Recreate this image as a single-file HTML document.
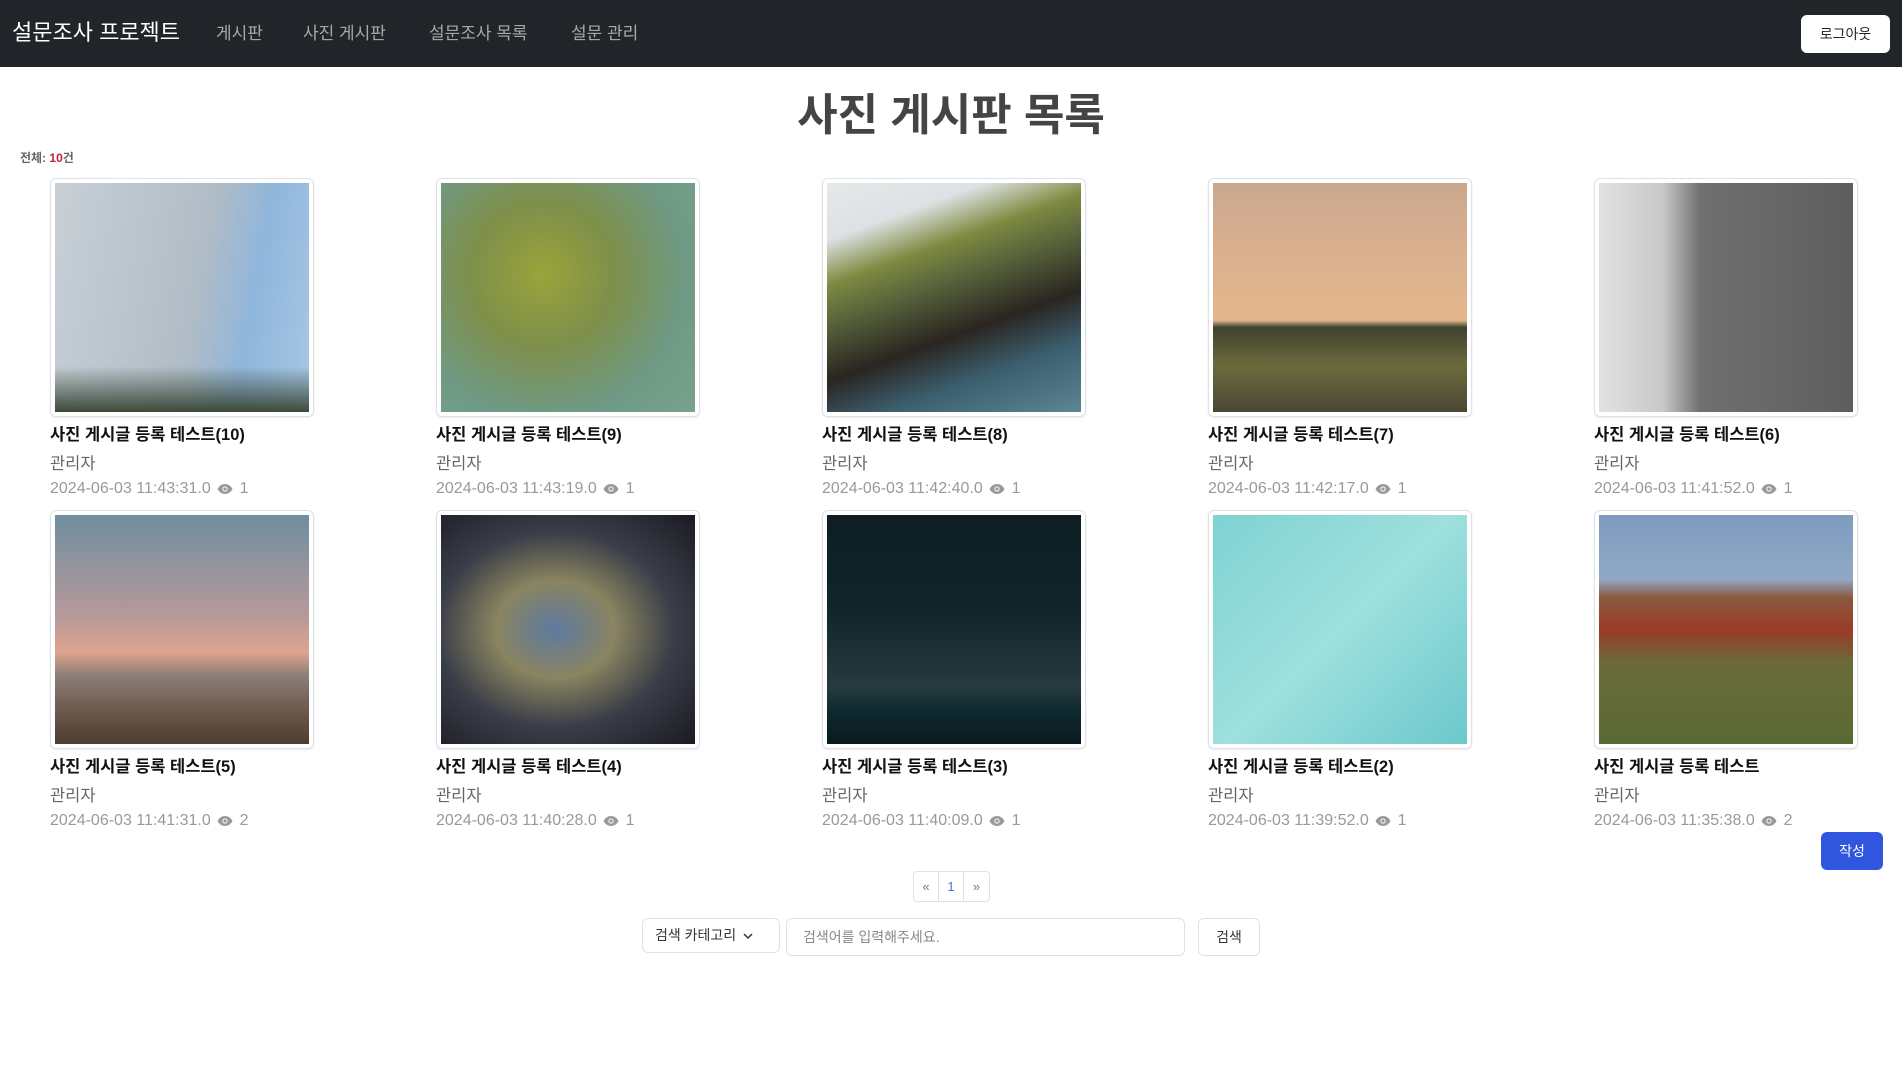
<!DOCTYPE html>
<html><head><meta charset="utf-8">
<style>
*{box-sizing:border-box;margin:0;padding:0}
body{width:1902px;height:1080px;background:#fff;font-family:"Liberation Sans","Noto Sans CJK KR",sans-serif;position:relative;overflow:hidden}
.nav{position:absolute;left:0;top:0;width:1902px;height:67px;background:#212529}
.brand{position:absolute;left:12px;top:19px;color:#fff;font-size:22px;line-height:28px}
.nl{position:absolute;top:22px;color:rgba(255,255,255,.6);font-size:17px;line-height:24px}
.logout{position:absolute;left:1801px;top:15px;width:89px;height:38px;background:#fff;border-radius:6px;font-size:14px;text-align:center;line-height:38px;color:#212529}
h1{position:absolute;left:0;width:1902px;top:89px;text-align:center;font-size:44px;font-weight:bold;color:#444;line-height:54px}
.total{position:absolute;left:20px;top:149px;font-size:12px;font-weight:bold;color:#666}
.total b{color:#c0203a}
.card{position:absolute;width:266px}
.thumb{width:264px;height:239px;border:1px solid #dee2e6;border-radius:6px;padding:4px;background:#fff;box-shadow:0 1px 2px rgba(0,0,0,.08)}
.img{width:100%;height:100%}
.t{margin-top:6px;font-size:16.5px;font-weight:bold;color:#111;line-height:24px}
.a{margin-top:5px;font-size:16.5px;color:#666;line-height:24px}
.d{font-size:16px;color:#999;line-height:24px;margin-top:1px}
.eye{display:inline-block;vertical-align:-2px;margin:0 2px}
.write{position:absolute;left:1821px;top:832px;width:62px;height:38px;background:#3056e0;color:#fff;border-radius:6px;text-align:center;line-height:38px;font-size:14px}
.pg{position:absolute;left:913px;top:871px;height:31px;border:1px solid #dee2e6;border-radius:4px;display:flex;font-size:13px}
.pg span{width:25px;text-align:center;line-height:29px;color:#777;border-right:1px solid #dee2e6}
.pg span:last-child{border-right:none}
.pg span.c{color:#3a7bd5}
.box{position:absolute;border:1px solid #dee2e6;border-radius:6px;font-size:14px;color:#333;line-height:36px}
</style></head><body>
<div class="nav">
<div class="brand">설문조사 프로젝트</div>
<div class="nl" style="left:216px">게시판</div>
<div class="nl" style="left:303px">사진 게시판</div>
<div class="nl" style="left:429px">설문조사 목록</div>
<div class="nl" style="left:571px">설문 관리</div>
<div class="logout">로그아웃</div>
</div>
<h1>사진 게시판 목록</h1>
<div class="total">전체: <b>10</b>건</div>

<div class="card" style="left:50px;top:178px"><div class="thumb"><div class="img" style="background:linear-gradient(180deg,rgba(0,0,0,0) 80%,#3c4a3a 100%),linear-gradient(100deg,#c8d0d6 0%,#b0bcc6 55%,#8fb6dc 75%,#a8c8e4 100%)"></div></div><div class="t">사진 게시글 등록 테스트(10)</div><div class="a">관리자</div><div class="d">2024-06-03 11:43:31.0 <svg class="eye" width="16" height="12" viewBox="0 0 16 12"><path d="M8 1C4 1 1.5 4 0.5 6 1.5 8 4 11 8 11s6.5-3 7.5-5C14.5 4 12 1 8 1z" fill="#999"/><circle cx="8" cy="6" r="2.6" fill="#fff"/><circle cx="8" cy="6" r="1.6" fill="#999"/></svg> 1</div></div>

<div class="card" style="left:436px;top:178px"><div class="thumb"><div class="img" style="background:radial-gradient(circle at 40% 40%,#9aa43a 0%,#7e8f4a 35%,#6e9a86 70%,#78a28e 100%)"></div></div><div class="t">사진 게시글 등록 테스트(9)</div><div class="a">관리자</div><div class="d">2024-06-03 11:43:19.0 <svg class="eye" width="16" height="12" viewBox="0 0 16 12"><path d="M8 1C4 1 1.5 4 0.5 6 1.5 8 4 11 8 11s6.5-3 7.5-5C14.5 4 12 1 8 1z" fill="#999"/><circle cx="8" cy="6" r="2.6" fill="#fff"/><circle cx="8" cy="6" r="1.6" fill="#999"/></svg> 1</div></div>

<div class="card" style="left:822px;top:178px"><div class="thumb"><div class="img" style="background:linear-gradient(160deg,#e6e9ea 0%,#dde1e3 18%,#7e8a40 32%,#55613a 45%,#2a2520 62%,#3b5f6e 78%,#5d8594 100%)"></div></div><div class="t">사진 게시글 등록 테스트(8)</div><div class="a">관리자</div><div class="d">2024-06-03 11:42:40.0 <svg class="eye" width="16" height="12" viewBox="0 0 16 12"><path d="M8 1C4 1 1.5 4 0.5 6 1.5 8 4 11 8 11s6.5-3 7.5-5C14.5 4 12 1 8 1z" fill="#999"/><circle cx="8" cy="6" r="2.6" fill="#fff"/><circle cx="8" cy="6" r="1.6" fill="#999"/></svg> 1</div></div>

<div class="card" style="left:1208px;top:178px"><div class="thumb"><div class="img" style="background:linear-gradient(180deg,#c9a78d 0%,#dcb290 35%,#e3b58a 60%,#3f4330 63%,#6c6a3c 80%,#4a4634 100%)"></div></div><div class="t">사진 게시글 등록 테스트(7)</div><div class="a">관리자</div><div class="d">2024-06-03 11:42:17.0 <svg class="eye" width="16" height="12" viewBox="0 0 16 12"><path d="M8 1C4 1 1.5 4 0.5 6 1.5 8 4 11 8 11s6.5-3 7.5-5C14.5 4 12 1 8 1z" fill="#999"/><circle cx="8" cy="6" r="2.6" fill="#fff"/><circle cx="8" cy="6" r="1.6" fill="#999"/></svg> 1</div></div>

<div class="card" style="left:1594px;top:178px"><div class="thumb"><div class="img" style="background:linear-gradient(90deg,#e2e2e2 0%,#c8c8c8 25%,#707070 40%,#5e5e5e 100%)"></div></div><div class="t">사진 게시글 등록 테스트(6)</div><div class="a">관리자</div><div class="d">2024-06-03 11:41:52.0 <svg class="eye" width="16" height="12" viewBox="0 0 16 12"><path d="M8 1C4 1 1.5 4 0.5 6 1.5 8 4 11 8 11s6.5-3 7.5-5C14.5 4 12 1 8 1z" fill="#999"/><circle cx="8" cy="6" r="2.6" fill="#fff"/><circle cx="8" cy="6" r="1.6" fill="#999"/></svg> 1</div></div>

<div class="card" style="left:50px;top:510px"><div class="thumb"><div class="img" style="background:linear-gradient(180deg,#6e8ea0 0%,#b89a9a 45%,#e0a48e 60%,#8a7e78 70%,#6e5a4e 85%,#4e3c30 100%)"></div></div><div class="t">사진 게시글 등록 테스트(5)</div><div class="a">관리자</div><div class="d">2024-06-03 11:41:31.0 <svg class="eye" width="16" height="12" viewBox="0 0 16 12"><path d="M8 1C4 1 1.5 4 0.5 6 1.5 8 4 11 8 11s6.5-3 7.5-5C14.5 4 12 1 8 1z" fill="#999"/><circle cx="8" cy="6" r="2.6" fill="#fff"/><circle cx="8" cy="6" r="1.6" fill="#999"/></svg> 2</div></div>

<div class="card" style="left:436px;top:510px"><div class="thumb"><div class="img" style="background:radial-gradient(ellipse at 45% 50%,#5e7aa0 0%,#8a8460 30%,#3a3e48 60%,#1a1a22 100%)"></div></div><div class="t">사진 게시글 등록 테스트(4)</div><div class="a">관리자</div><div class="d">2024-06-03 11:40:28.0 <svg class="eye" width="16" height="12" viewBox="0 0 16 12"><path d="M8 1C4 1 1.5 4 0.5 6 1.5 8 4 11 8 11s6.5-3 7.5-5C14.5 4 12 1 8 1z" fill="#999"/><circle cx="8" cy="6" r="2.6" fill="#fff"/><circle cx="8" cy="6" r="1.6" fill="#999"/></svg> 1</div></div>

<div class="card" style="left:822px;top:510px"><div class="thumb"><div class="img" style="background:linear-gradient(180deg,#0e1e22 0%,#10242a 40%,#1e3036 60%,#283a3e 75%,#0e2a30 85%,#0a1a1e 100%)"></div></div><div class="t">사진 게시글 등록 테스트(3)</div><div class="a">관리자</div><div class="d">2024-06-03 11:40:09.0 <svg class="eye" width="16" height="12" viewBox="0 0 16 12"><path d="M8 1C4 1 1.5 4 0.5 6 1.5 8 4 11 8 11s6.5-3 7.5-5C14.5 4 12 1 8 1z" fill="#999"/><circle cx="8" cy="6" r="2.6" fill="#fff"/><circle cx="8" cy="6" r="1.6" fill="#999"/></svg> 1</div></div>

<div class="card" style="left:1208px;top:510px"><div class="thumb"><div class="img" style="background:linear-gradient(135deg,#7fd2d2 0%,#9ee0de 50%,#6cc8cc 100%)"></div></div><div class="t">사진 게시글 등록 테스트(2)</div><div class="a">관리자</div><div class="d">2024-06-03 11:39:52.0 <svg class="eye" width="16" height="12" viewBox="0 0 16 12"><path d="M8 1C4 1 1.5 4 0.5 6 1.5 8 4 11 8 11s6.5-3 7.5-5C14.5 4 12 1 8 1z" fill="#999"/><circle cx="8" cy="6" r="2.6" fill="#fff"/><circle cx="8" cy="6" r="1.6" fill="#999"/></svg> 1</div></div>

<div class="card" style="left:1594px;top:510px"><div class="thumb"><div class="img" style="background:linear-gradient(180deg,#7e9cc0 0%,#90a8c6 28%,#8a5a40 36%,#9a3a28 50%,#6a6a3a 65%,#5a6a34 100%)"></div></div><div class="t">사진 게시글 등록 테스트</div><div class="a">관리자</div><div class="d">2024-06-03 11:35:38.0 <svg class="eye" width="16" height="12" viewBox="0 0 16 12"><path d="M8 1C4 1 1.5 4 0.5 6 1.5 8 4 11 8 11s6.5-3 7.5-5C14.5 4 12 1 8 1z" fill="#999"/><circle cx="8" cy="6" r="2.6" fill="#fff"/><circle cx="8" cy="6" r="1.6" fill="#999"/></svg> 2</div></div>

<div class="write">작성</div>
<div class="pg"><span>«</span><span class="c">1</span><span>»</span></div>
<div class="box" style="left:642px;top:918px;width:138px;height:35px;padding-left:12px;line-height:33px">검색 카테고리 <svg width="10" height="8" viewBox="0 0 10 8" style="margin-left:3px"><path d="M1 2l4 4 4-4" stroke="#333" stroke-width="1.5" fill="none"/></svg></div>
<div class="box" style="left:786px;top:918px;width:399px;height:38px;padding-left:16px;color:#888">검색어를 입력해주세요.</div>
<div class="box" style="left:1198px;top:918px;width:62px;height:38px;text-align:center">검색</div>
</body></html>
